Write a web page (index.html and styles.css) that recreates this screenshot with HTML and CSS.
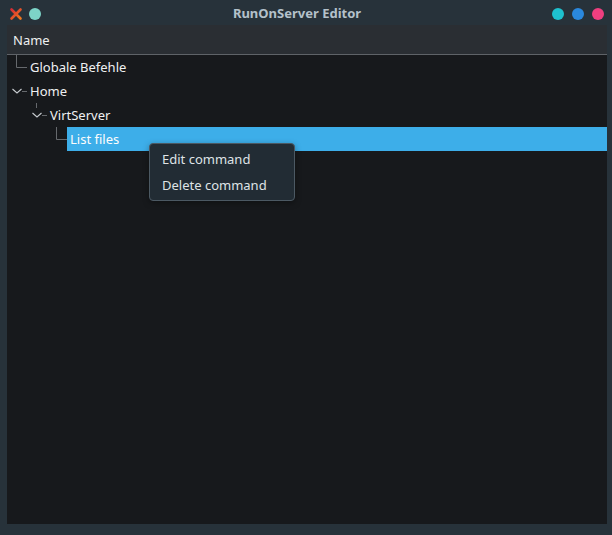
FILE: index.html
```html
<!DOCTYPE html>
<html>
<head>
<meta charset="utf-8">
<link rel="stylesheet" href="styles.css">
</head>
<body>
<div class="window">
  <div class="titlebar">
    <div class="tb-left">
      <svg class="close" width="14" height="14" viewBox="0 0 14 14">
        <defs>
          <linearGradient id="xg" x1="0" y1="0" x2="1" y2="1">
            <stop offset="0" stop-color="#d92c34"/>
            <stop offset="1" stop-color="#f0781e"/>
          </linearGradient>
        </defs>
        <path d="M2.5 2.5 L11.5 11.5 M11.5 2.5 L2.5 11.5" stroke="url(#xg)" stroke-width="2.6" stroke-linecap="round"/>
      </svg>
      <span class="dot dot-mint"></span>
    </div>
    <div class="title">RunOnServer Editor</div>
    <div class="tb-right">
      <span class="dot dot-cyan"></span>
      <span class="dot dot-blue"></span>
      <span class="dot dot-pink"></span>
    </div>
  </div>
  <div class="content">
    <div class="header">Name</div>
    <div class="tree">
      <div class="row">
        <svg class="branch" width="20" height="24" viewBox="0 0 20 24"><path d="M9.5 0 V12.5 H20" stroke="#66696d" fill="none"/></svg>
        <span class="label">Globale Befehle</span>
      </div>
      <div class="row">
        <svg class="branch" width="20" height="24" viewBox="0 0 20 24"><path d="M5.5 10 L10 14 L14.5 10" stroke="#c8ccd0" fill="none" stroke-width="1.1"/><path d="M15 12.5 H20" stroke="#66696d" fill="none"/></svg>
        <span class="label">Home</span>
      </div>
      <div class="row">
        <span class="indent"></span>
        <svg class="branch" width="20" height="24" viewBox="0 0 20 24"><path d="M9.5 0 V5" stroke="#66696d" fill="none"/><path d="M5.5 10 L10 14 L14.5 10" stroke="#c8ccd0" fill="none" stroke-width="1.1"/><path d="M15 12.5 H20" stroke="#66696d" fill="none"/></svg>
        <span class="label">VirtServer</span>
      </div>
      <div class="row">
        <span class="indent"></span>
        <span class="indent"></span>
        <svg class="branch" width="20" height="24" viewBox="0 0 20 24"><path d="M9.5 0 V12.5 H20" stroke="#66696d" fill="none"/></svg>
        <span class="label selected">List files</span>
      </div>
      <div class="menu">
        <div class="menu-item">Edit command</div>
        <div class="menu-item">Delete command</div>
      </div>
    </div>
  </div>
</div>
</body>
</html>
```

FILE: styles.css
```css
html, body {
  margin: 0;
  padding: 0;
  height: 100%;
}
body {
  background: #27323a;
  font-family: "Noto Sans", "DejaVu Sans", sans-serif;
  font-size: 13px;
  color: #eff0f1;
  overflow: hidden;
}
.window {
  height: 535px;
  display: flex;
  flex-direction: column;
}
.titlebar {
  height: 25px;
  flex: none;
  display: flex;
  align-items: center;
  justify-content: space-between;
  position: relative;
  padding: 0 8px 0 9px;
}
.tb-left, .tb-right {
  display: flex;
  align-items: center;
  gap: 8px;
  margin-top: 3px;
}
.close {
  display: block;
  margin-right: -2px;
}
.dot {
  width: 12px;
  height: 12px;
  border-radius: 50%;
  display: block;
}
.dot-mint { background: #7dd4c8; }
.dot-cyan { background: #1ec1cf; }
.dot-blue { background: #2a88dd; }
.dot-pink { background: #ee3f7f; }
.title {
  position: absolute;
  left: 0;
  right: 18px;
  top: 4px;
  text-align: center;
  font-weight: bold;
  color: #b4c1ca;
  font-size: 13px;
  line-height: 18px;
  pointer-events: none;
}
.content {
  flex: 1;
  margin: 0 5px 11px 7px;
  display: flex;
  flex-direction: column;
  background: #17191c;
}
.header {
  height: 29px;
  flex: none;
  background: #2a2e33;
  border-bottom: 1px solid #5f6368;
  padding-left: 6px;
  line-height: 30px;
  color: #eff0f1;
}
.tree {
  flex: 1;
  position: relative;
}
.row {
  display: flex;
  height: 24px;
  align-items: stretch;
}
.indent {
  width: 20px;
  flex: none;
}
.branch {
  display: block;
  flex: none;
}
.label {
  padding-left: 3px;
  line-height: 24px;
}
.label.selected {
  flex: 1;
  background: #3daee9;
  color: #fcfcfc;
  padding-left: 3px;
}
.menu {
  position: absolute;
  left: 142px;
  top: 88px;
  width: 144px;
  background: #222c34;
  border: 1px solid #4c5963;
  border-radius: 4px;
  padding: 2px 0;
  box-shadow: 0 2px 6px rgba(0,0,0,0.35);
}
.menu-item {
  height: 26px;
  line-height: 26px;
  padding-left: 12px;
  color: #dfe3e6;
}
```
